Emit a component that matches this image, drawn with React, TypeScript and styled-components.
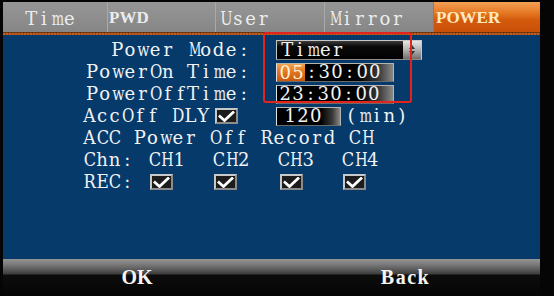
import React from "react";
import styled, { createGlobalStyle } from "styled-components";

const Global = createGlobalStyle`
  html, body { margin: 0; padding: 0; background: #000; }
  body { width: 554px; height: 296px; overflow: hidden; }
`;

const OSD = `"DejaVu Serif", "Liberation Serif", serif`;
const SERIF = `"Liberation Serif", "DejaVu Serif", serif`;
const CELL = 12.65;
const OSD_SIZE = 18;

let measureCtx: CanvasRenderingContext2D | null = null;
const glyphScale = (ch: string): number => {
  if (typeof document === "undefined") return 1;
  if (!measureCtx) measureCtx = document.createElement("canvas").getContext("2d");
  if (!measureCtx) return 1;
  measureCtx.font = `400 ${OSD_SIZE}px ${OSD}`;
  const w = measureCtx.measureText(ch).width;
  const room = CELL - 0.3;
  return w > room ? room / w : 1;
};

const Frame = styled.div`
  position: relative;
  width: 554px;
  height: 296px;
  box-sizing: border-box;
  padding-left: 3px;
  background: #050505;
  display: flex;
`;

const Screen = styled.div`
  width: 537px;
  height: 296px;
  display: flex;
  flex-direction: column;
`;

const TabBar = styled.div`
  display: grid;
  grid-template-columns: 104px 108px 109px 109px 107px;
  height: 30px;
  margin-top: 2px;
`;

const Tab = styled.div<{ $active?: boolean; $pad: number; $serif?: boolean }>`
  display: flex;
  align-items: center;
  padding-left: ${(p) => p.$pad}px;
  padding-top: 2px;
  box-sizing: border-box;
  border-left: 1px solid ${(p) => (p.$active ? "#c86a2a" : "#a9a9a9")};
  &:first-child { border-left: none; }
  background: ${(p) =>
    p.$active
      ? "linear-gradient(180deg, #f3a055 0%, #e57a25 35%, #d45a0c 60%, #c94f08 100%)"
      : "linear-gradient(180deg, #969696 0%, #8e8e8e 50%, #868686 100%)"};
  color: ${(p) => (p.$active ? "#ffeac0" : "#ececec")};
  font-family: ${(p) => (p.$serif ? SERIF : OSD)};
  font-weight: ${(p) => (p.$serif ? 700 : 400)};
  font-size: ${(p) => (p.$serif ? 17 : OSD_SIZE)}px;
  white-space: pre;
`;

const Rule = styled.div`
  height: 3px;
  background: repeating-linear-gradient(90deg, #c0601f 0 2px, #94461a 2px 3px);
  border-top: 1px solid #6e3510;
  box-sizing: border-box;
`;

const Content = styled.div`
  flex: 1;
  background: #053a6b;
  padding: 4px 0 0 80px;
  font-family: ${OSD};
  font-size: ${OSD_SIZE}px;
  color: #f2f2f2;
`;

const Ch = styled.span`
  display: inline-block;
  flex: none;
  width: ${CELL}px;
  text-align: center;
`;

const Mono = ({ text }: { text: string }) => (
  <>
    {Array.from(text).map((c, i) => {
      const s = c === " " ? 1 : glyphScale(c);
      return (
        <Ch key={i} style={s < 1 ? { transform: `scaleX(${s.toFixed(3)})` } : undefined}>
          {c === " " ? "\u00a0" : c}
        </Ch>
      );
    })}
  </>
);

const Form = styled.div`
  display: grid;
  grid-template-columns: 167px 1fr;
  column-gap: 26px;
  grid-auto-rows: 22px;
  align-items: center;
`;

const Label = styled.div`
  text-align: right;
  white-space: nowrap;
  line-height: 22px;
`;

const Cell = styled.div`
  display: flex;
  align-items: center;
  white-space: nowrap;
  line-height: 22px;
`;

const Select = styled.div`
  width: 146px;
  height: 20px;
  box-sizing: border-box;
  display: flex;
  border: 1px solid #c8c8c8;
  border-bottom-color: #8a8a8a;
  background: linear-gradient(180deg, #3c3c3c 0%, #0a0a0a 30%, #000 100%);
  line-height: 18px;
`;

const SelectText = styled.span`
  flex: 1;
  padding-left: 4px;
  white-space: nowrap;
`;

const Spinner = styled.div`
  width: 18px;
  background: linear-gradient(180deg, #e6e6e6 0%, #b8b8b8 45%, #6e6e6e 100%);
  display: flex;
  align-items: center;
  justify-content: center;
`;

const Field = styled.div<{ $w: number; $pad: number }>`
  width: ${(p) => p.$w}px;
  height: 19px;
  box-sizing: border-box;
  display: flex;
  align-items: center;
  padding-left: ${(p) => p.$pad}px;
  border: 1px solid #b4b4b4;
  border-left-color: #e0e0e0;
  border-bottom-color: #6a6a6a;
  background: linear-gradient(90deg, #000 0%, #000 70%, #3a3a3a 88%, #8a8a8a 100%);
  line-height: 18px;
  white-space: nowrap;
`;

const Highlight = styled.span`
  background: linear-gradient(180deg, #f5a048 0%, #e07420 50%, #c8580c 100%);
  color: #fff0d8;
  margin-left: -2px;
  padding: 0 1px 0 2px;
  height: 17px;
  line-height: 18px;
`;

const Unit = styled.span`
  margin-left: 4px;
`;

const Line = styled.div`
  height: 22px;
  line-height: 22px;
  white-space: nowrap;
`;

const Channels = styled.div`
  display: grid;
  grid-template-columns: repeat(5, 64.5px);
  grid-auto-rows: 22px;
  align-items: center;
`;

const Box = styled.div<{ $ml: number }>`
  width: 23px;
  height: 16px;
  box-sizing: border-box;
  margin-left: ${(p) => p.$ml}px;
  border: 2px solid #c8c8c8;
  border-right-color: #8c8c8c;
  border-bottom-color: #8c8c8c;
  background: #1c1c1c;
  display: flex;
  align-items: center;
  justify-content: center;
`;

const Footer = styled.div`
  height: 37px;
  display: grid;
  grid-template-columns: 268px 269px;
  background: linear-gradient(
    180deg,
    #949494 0px,
    #7c7c7c 5px,
    #5e5e5e 10px,
    #3c3c3c 15px,
    #0c0c0c 16px,
    #050505 100%
  );
`;

const FootButton = styled.div<{ $spacing: number }>`
  text-align: center;
  padding-top: 8px;
  line-height: 20px;
  font-family: ${SERIF};
  font-weight: 700;
  font-size: 20px;
  letter-spacing: ${(p) => p.$spacing}px;
  color: #f4f4f4;
`;

const Annotation = styled.div`
  position: absolute;
  left: 263px;
  top: 32px;
  width: 149px;
  height: 71px;
  box-sizing: border-box;
  border: 2px solid #e4241c;
  border-radius: 3px;
  pointer-events: none;
`;

const Check = ({ ml = 0 }: { ml?: number }) => (
  <Box $ml={ml}>
    <svg width="17" height="11" viewBox="0 0 17 11">
      <path d="M2 5.5 L6.5 9.5 L15 1.5" fill="none" stroke="#fff" strokeWidth="2.8" strokeLinecap="square" />
    </svg>
  </Box>
);

export default function App() {
  return (
    <>
      <Global />
      <Frame>
        <Screen>
          <TabBar>
            <Tab $pad={22}><Mono text="Time" /></Tab>
            <Tab $pad={1} $serif>PWD</Tab>
            <Tab $pad={3}><Mono text="User" /></Tab>
            <Tab $pad={3}><Mono text="Mirror" /></Tab>
            <Tab $pad={2} $active $serif>POWER</Tab>
          </TabBar>
          <Rule />
          <Content>
            <Form>
              <Label><Mono text="Power Mode:" /></Label>
              <Cell>
                <Select>
                  <SelectText><Mono text="Timer" /></SelectText>
                  <Spinner>
                    <svg width="8" height="12" viewBox="0 0 8 12">
                      <path d="M4 1 L7 5 L1 5 Z" fill="#333" />
                      <path d="M4 11 L7 7 L1 7 Z" fill="#333" />
                    </svg>
                  </Spinner>
                </Select>
              </Cell>
              <Label><Mono text="PowerOn Time:" /></Label>
              <Cell>
                <Field $w={118} $pad={2}>
                  <Highlight><Mono text="05" /></Highlight>
                  <Mono text=":30:00" />
                </Field>
              </Cell>
              <Label><Mono text="PowerOffTime:" /></Label>
              <Cell>
                <Field $w={118} $pad={2}><Mono text="23:30:00" /></Field>
              </Cell>
              <Cell>
                <Mono text="AccOff DLY" />
                <Check ml={6} />
              </Cell>
              <Cell>
                <Field $w={65} $pad={7}><Mono text="120" /></Field>
                <Unit><Mono text="(min)" /></Unit>
              </Cell>
            </Form>
            <Line><Mono text="ACC Power Off Record CH" /></Line>
            <Channels>
              <Cell><Mono text="Chn:" /></Cell>
              <Cell><Mono text="CH1" /></Cell>
              <Cell><Mono text="CH2" /></Cell>
              <Cell><Mono text="CH3" /></Cell>
              <Cell><Mono text="CH4" /></Cell>
              <Cell><Mono text="REC:" /></Cell>
              <Check ml={2} />
              <Check ml={2} />
              <Check ml={3} />
              <Check ml={2} />
            </Channels>
          </Content>
          <Footer>
            <FootButton $spacing={0}>OK</FootButton>
            <FootButton $spacing={1.5}>Back</FootButton>
          </Footer>
        </Screen>
        <Annotation />
      </Frame>
    </>
  );
}
